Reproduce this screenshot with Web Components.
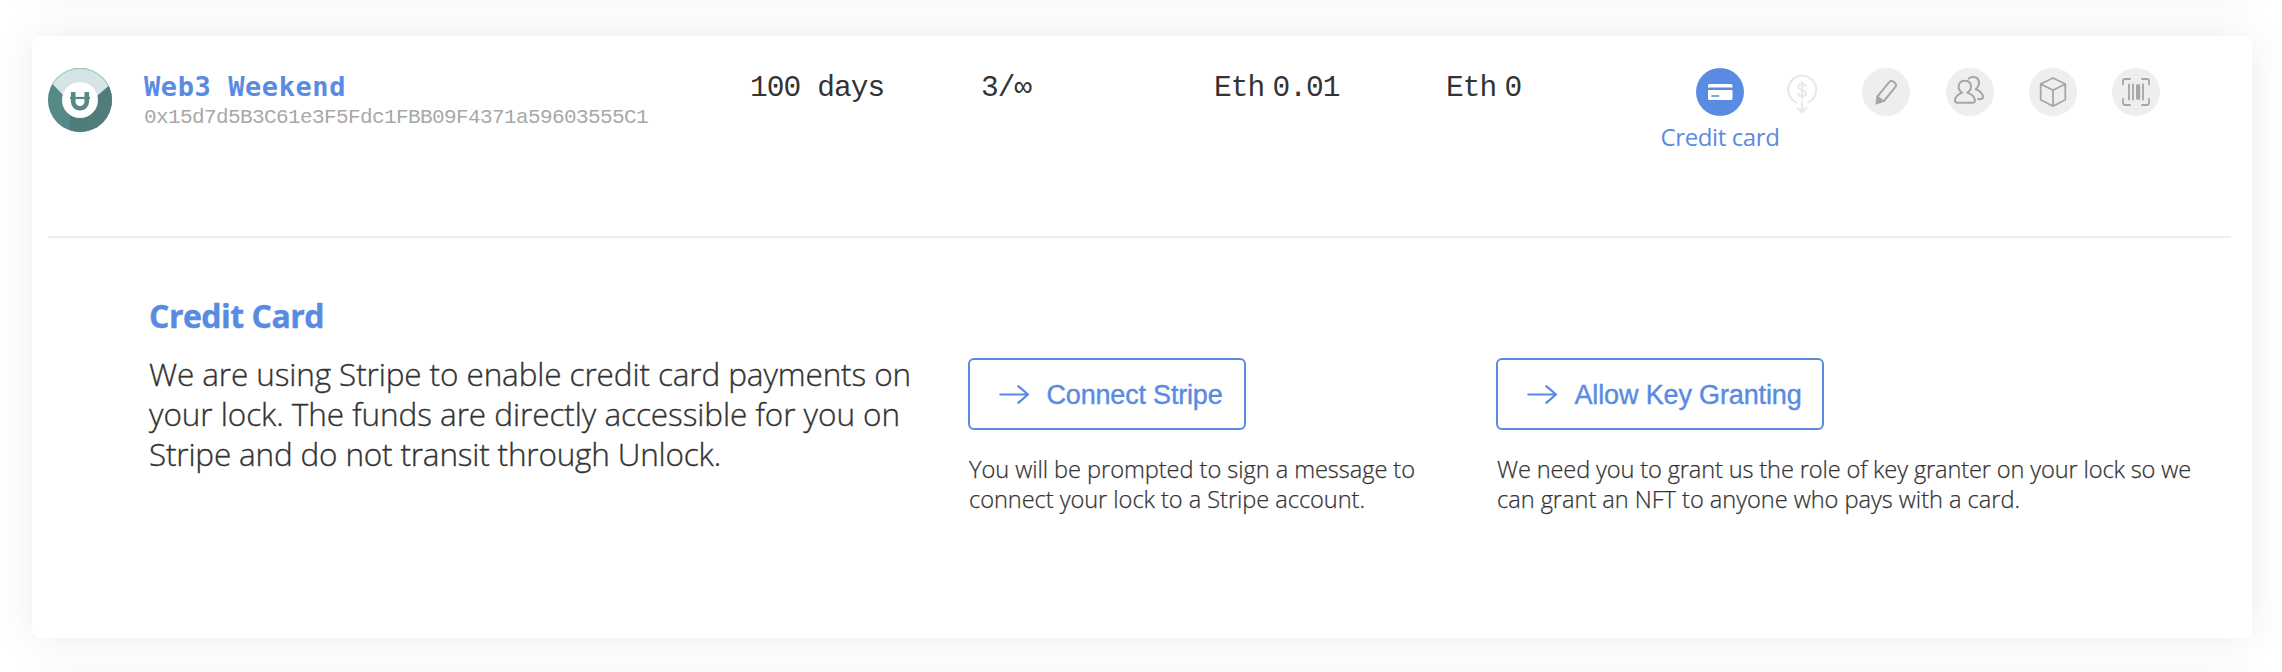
<!DOCTYPE html>
<html lang="en">
<head>
<meta charset="utf-8">
<title>Locks</title>
<style>
html,body{margin:0;height:100%;overflow:hidden;background:#fff}
body{font-family:"Open Sans","Noto Sans",sans-serif;color:#333}
</style>
</head>
<body>
<lock-list>
  <lock-card>
    <lock-header slot="header"></lock-header>
    <credit-card-panel></credit-card-panel>
  </lock-card>
</lock-list>
<script>
const define = (name, html, setup) => customElements.define(name, class extends HTMLElement {
  connectedCallback() {
    if (this.shadowRoot) return;
    this.attachShadow({mode: 'open'}).innerHTML = html;
    if (setup) setup(this);
  }
});

// A single line of text tracked out to a given measure.
define('text-line', `<style>:host{display:block;white-space:nowrap}span{display:inline-block;letter-spacing:0}</style><span><slot></slot></span>`, el => {
  const target = +el.getAttribute('measure');
  const span = el.shadowRoot.querySelector('span');
  const n = el.textContent.length;
  span.style.letterSpacing = (target - span.getBoundingClientRect().width) / n + 'px';
});

define('lock-list', `<style>
:host{display:block;height:672px;box-sizing:border-box;padding:36px 30px 0 32px;overflow:hidden}
</style><slot></slot>`);

// The offset shadows belong to the rows above and below in the stack.
define('lock-card', `<style>
:host{display:block;height:602px;border-radius:8px;background:#fff;box-shadow:0 0 40px rgba(0,0,0,.08),0 650px 40px rgba(0,0,0,.08),0 -650px 40px rgba(0,0,0,.08);box-sizing:border-box;padding:32px 21px 0 16px}
hr{margin:0;border:0;height:2px;background:#eee}
</style><slot name="header"></slot><hr><slot></slot>`);

define('lock-avatar', `<style>:host{display:block;width:64px;height:64px}svg{display:block}</style>
<svg width="64" height="64" viewBox="0 0 64 64">
<defs><clipPath id="c"><circle cx="32" cy="32" r="32"/></clipPath></defs>
<g clip-path="url(#c)"><rect width="64" height="64" fill="#568a89"/>
<path d="M21 64L22 48L32 32L68 12V64Z" fill="#507c7c"/>
<path d="M0 11L4 15.5L15 27L32 40L50 27L60 18.5L64 14V0H0Z" fill="#d3e5e7"/></g>
<circle cx="32" cy="32" r="31.6" fill="none" stroke="#568a89" stroke-opacity=".4" stroke-width=".8"/>
<circle cx="32" cy="32" r="18" fill="#fff"/>
<path d="M25.2 24V33.5A6.8 6.8 0 0 0 38.8 33.5V24" fill="none" stroke="#568a89" stroke-width="4.6"/>
<path d="M22 30H42" stroke="#568a89" stroke-width="2.2"/></svg>`);

const glyphs = {
  card: `<rect x="12" y="16" width="24.5" height="16" rx="1.6" fill="#fff"/><path d="M12 20.8H36.5" stroke="#5a8be2" stroke-width="2.4"/><path d="M16 28H22.5" stroke="#5a8be2" stroke-width="1.6" stroke-linecap="round"/>`,
  dollar: `<g transform="translate(-1 0)"><path d="M18 34.3A14 14 0 1 1 30.4 34.3" stroke-width="2.2"/><path d="M24 33.5V43.5M19.7 40L24 44.2L28.3 40" stroke-width="2.2"/><path d="M27.6 18.3C27 16.7 25.8 16 24 16C21.7 16 20.2 17.3 20.2 19C20.2 23 28 21 28 25C28 27 26.4 28.2 24 28.2C21.8 28.2 20.3 27.3 19.8 25.5M24 13.8V30.5" stroke-width="1.9"/></g>`,
  pencil: `<path d="M15.8 28.2L27.2 14.2Q28.6 12.2 30.8 13.2L33 15Q34.9 16.6 33.6 18.7L22 33" stroke-width="2"/><path d="M15.3 27.8L22.3 33.3L14.3 36Z" fill="#a6a6a6" stroke="#a6a6a6" stroke-width="1"/>`,
  users: `<path d="M16.2 24.6C12.8 22.5 12.2 19.8 12.8 17.2C14 11.3 23.6 11.3 24.9 17.2C25.4 19.8 24.8 22.5 21.4 24.6C25.4 26 28 28 28.8 31.5C29.3 33.8 28 34.8 26.5 34.8H11.5C9.5 34.8 8.6 33.5 9 31.5C10 28 12.4 26 16.2 24.6Z" stroke-width="2"/><path d="M22.8 10.6C25.5 7.9 31 8.4 32.6 12.4C33.8 16 32.8 18.7 29.6 21C33.3 22.5 35.8 24.4 36.9 27.8C37.7 30.3 35.7 31.6 32 31" stroke-width="2"/>`,
  cube: `<path d="M24 10L36.3 16V31.8L24 38.2L11.7 31.8V16ZM11.7 16L24 22.3L36.3 16M24 22.3V38" stroke-width="1.8"/>`,
  barcode: `<path d="M18 11H13.2Q11 11 11 13.2V16.5M30 11H34.8Q37 11 37 13.2V16.5M11 31V34.8Q11 37 13.2 37H18M37 31V34.8Q37 37 34.8 37H30" stroke-width="1.8"/><path d="M17 16.5V31.5M21 16.5V31.5M31 16.5V31.5" stroke-width="1.8"/><rect x="24" y="16" width="4.2" height="16" rx="2" fill="#a6a6a6" stroke="none"/>`
};
define('lock-action', `<style>
:host{display:flex;flex-direction:column;align-items:center;width:48px}
.disc{width:48px;height:48px;border-radius:50%;background:#eee;flex:none}
:host([active]) .disc{background:#5a8be2}
:host([disabled]) .disc{background:none}
svg{display:block;fill:none;stroke:#a6a6a6;stroke-linecap:round;stroke-linejoin:round}
:host([disabled]) svg{stroke:#e9e9e9}
:host([active]) svg{stroke:none}
.label{font-size:24px;line-height:30px;margin-top:6px;color:#5a8be2}
</style><div class="disc"><svg width="48" height="48" viewBox="0 0 48 48"></svg></div><div class="label"><slot></slot></div>`, el => {
  el.shadowRoot.querySelector('svg').innerHTML = glyphs[el.getAttribute('icon')];
});

define('lock-header', `<style>
:host{display:grid;grid-template-columns:96px 606px 231px 233px 232px 250px 1fr;height:168px;font:29.5px/36px "Liberation Mono",monospace;letter-spacing:-.9px;color:#333}
.name{font:700 27px/36px "DejaVu Sans Mono",monospace;color:#5a8be2}
.addr{font-size:21px;line-height:26px;color:#a8a8a8}
.id{margin-top:1px}
.cell{display:flex;gap:8px;align-items:flex-start;margin-top:2px}
.actions{display:grid;grid-template-columns:repeat(6,83.2px);align-items:start;font-family:"Open Sans","Noto Sans",sans-serif}
</style>
<lock-avatar></lock-avatar>
<div class="id"><div class="name"><text-line measure="202">Web3 Weekend</text-line></div><div class="addr"><text-line measure="504">0x15d7d5B3C61e3F5Fdc1FBB09F4371a59603555C1</text-line></div></div>
<div class="cell">100 days</div>
<div class="cell">3/∞</div>
<div class="cell"><span>Eth</span><span>0.01</span></div>
<div class="cell"><span>Eth</span><span>0</span></div>
<div class="actions">
<lock-action icon="card" active><text-line measure="119">Credit card</text-line></lock-action>
<lock-action icon="dollar" disabled></lock-action>
<lock-action icon="pencil"></lock-action>
<lock-action icon="users"></lock-action>
<lock-action icon="cube"></lock-action>
<lock-action icon="barcode"></lock-action>
</div>`);

define('outline-button', `<style>
:host{display:block}
button{display:flex;align-items:center;width:100%;height:72px;box-sizing:border-box;margin:0;padding:1px 0 0 29px;gap:16.5px;border:2px solid #5a8be2;border-radius:6px;background:#fff;color:#5a8be2;font:27px/32px "Liberation Sans",Arial,sans-serif;-webkit-text-stroke:.4px #5a8be2}
svg{flex:none;fill:none;stroke:#5a8be2;stroke-width:2.2;stroke-linecap:round;stroke-linejoin:round}
</style><button><svg width="31" height="20" viewBox="0 0 31 20"><path d="M1.3 9.5H29M19.3 1.2L29 9.5L19.3 17.8"/></svg><slot></slot></button>`);

define('credit-card-panel', `<style>
:host{display:grid;grid-template-columns:819px 528px 1fr;padding-left:101px}
h2{margin:58px 0 18px;font-size:32px;line-height:40px;color:#5a8be2;font-weight:700;-webkit-text-stroke:.4px #5a8be2}
.lead{font-size:31.5px;line-height:40px;font-weight:300;-webkit-text-stroke:.35px #333}
.step{padding-top:120px}
.note{font-size:23.6px;line-height:30px;font-weight:300;padding:24px 0 0 1px;-webkit-text-stroke:.25px #333}
</style>
<section><h2><text-line measure="175">Credit Card</text-line></h2>
<div class="lead"><text-line measure="762">We are using Stripe to enable credit card payments on</text-line><text-line measure="751">your lock. The funds are directly accessible for you on</text-line><text-line measure="572">Stripe and do not transit through Unlock.</text-line></div></section>
<section class="step"><outline-button style="width:278px"><text-line measure="176">Connect Stripe</text-line></outline-button>
<div class="note"><text-line measure="446">You will be prompted to sign a message to</text-line><text-line measure="396">connect your lock to a Stripe account.</text-line></div></section>
<section class="step"><outline-button style="width:328px"><text-line measure="227">Allow Key Granting</text-line></outline-button>
<div class="note"><text-line measure="694">We need you to grant us the role of key granter on your lock so we</text-line><text-line measure="523">can grant an NFT to anyone who pays with a card.</text-line></div></section>`);
</script>
</body>
</html>
